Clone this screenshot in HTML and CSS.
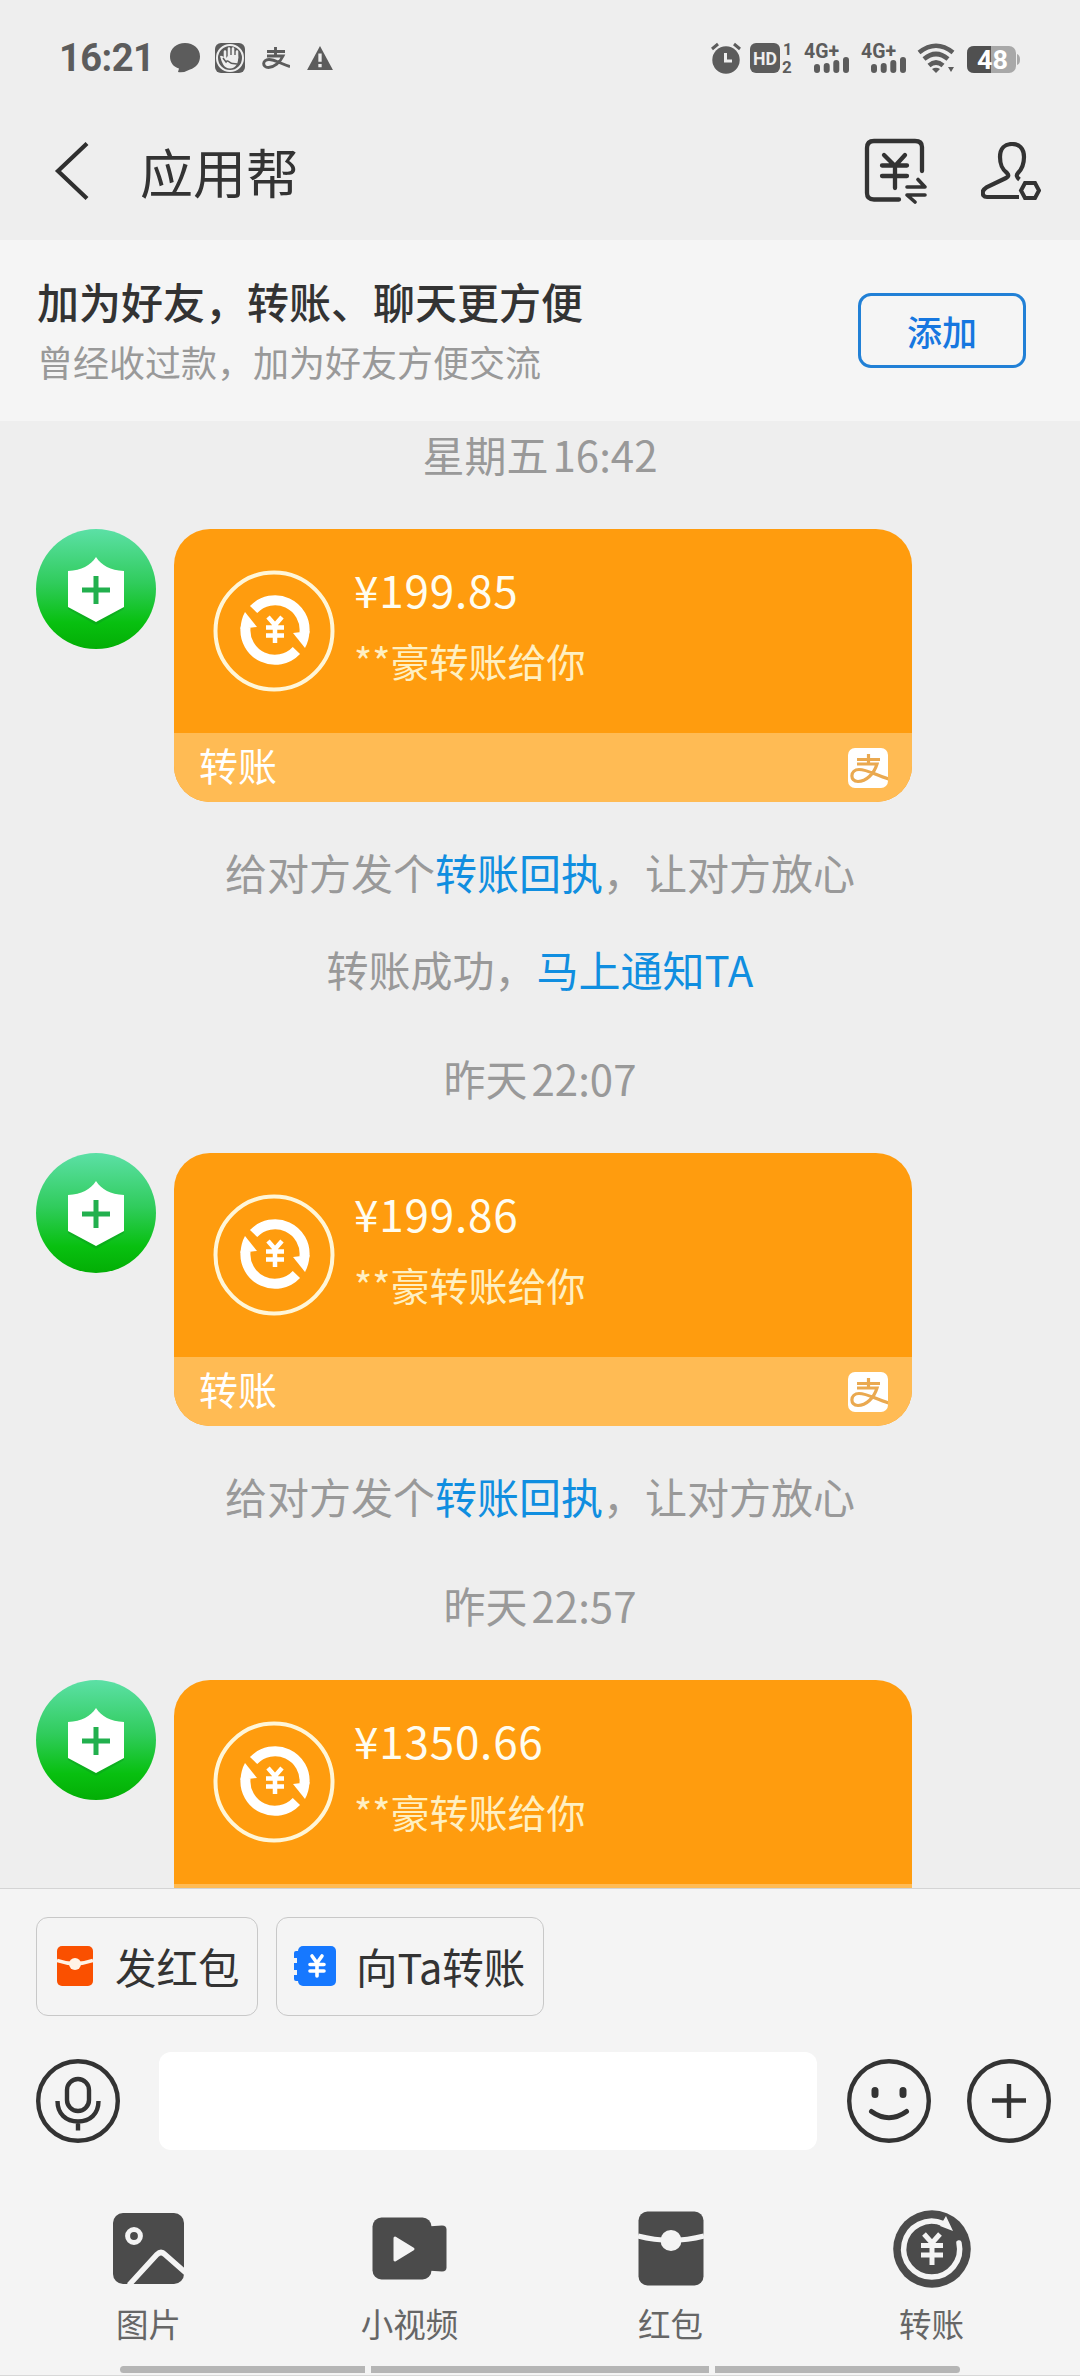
FILE: index.html
```html
<!DOCTYPE html>
<html lang="zh-CN">
<head>
<meta charset="utf-8">
<title>应用帮</title>
<link rel="stylesheet" href="styles.css">
</head>
<body>
<svg class="defs" width="0" height="0" aria-hidden="true">
  <defs>
    <linearGradient id="green" x1="0" y1="0" x2="0" y2="1">
      <stop offset="0" stop-color="#5ce0a6"/>
      <stop offset=".45" stop-color="#30cc5c"/>
      <stop offset=".78" stop-color="#08c010"/>
      <stop offset="1" stop-color="#03ae05"/>
    </linearGradient>
    <symbol id="avatar" viewBox="0 0 120 120">
      <circle cx="60" cy="60" r="60" fill="url(#green)"/>
      <path d="M32 45V80L60 96L88 80V45Z" fill="#0a9a20" opacity=".45"/>
      <path d="M60 28C54 37 46 41 32 42V78L60 93L88 78V42C74 41 66 37 60 28Z" fill="#fff"/>
      <path d="M60 47V75M46 61H74" stroke="#22b04e" stroke-width="5"/>
    </symbol>
    <symbol id="transfer" viewBox="0 0 122 122">
      <circle cx="61" cy="61" r="58.5" fill="none" stroke="#fff6d8" stroke-width="4"/>
      <g id="half">
        <path d="M40.6 39.5A29.5 29.5 0 0 1 91.4 63" fill="none" stroke="#fff" stroke-width="10"/>
        <path d="M80 63L96.500 61Q96 71 92 78Z" fill="#fff"/>
      </g>
      <use href="#half" transform="rotate(180 62 60)"/>
      <path d="M55 47L62 55L69 47M62 55V73M53 57.500H71M53 65.500H71" fill="none" stroke="#fff" stroke-width="4.500"/>
    </symbol>
    <symbol id="zhi" viewBox="0 0 40 40">
      <path d="M9 11.500H32M20.500 6V16M9 16H29C26 26 18 33.500 10 33.500C1.500 33.500 2 21.500 11 21.500C20 21.500 29 28 41 31" fill="none" stroke="currentColor" stroke-width="3.200"/>
    </symbol>
    <symbol id="signal" viewBox="0 0 46 32">
      <g stroke="#5c5c5c" stroke-width="6" stroke-linecap="round">
        <path d="M13 25V28M22.700 24V28M32.300 21V28M42 18V28"/>
      </g>
    </symbol>
  </defs>
</svg>

<div class="screen">
  <header class="top">
    <div class="status">
      <span class="clock">16:21</span>
      <svg class="s-chat" width="30" height="30" viewBox="0 0 30 30"><path d="M15 0C23.500 0 30 5.500 30 13.500C30 20 26 24.500 20 26.500Q14 30 8 29L9 25.500C3.500 24 0 19.500 0 13.500C0 5.500 6.500 0 15 0Z" fill="#5c5c5c"/></svg>
      <svg class="s-hand" width="30" height="30" viewBox="0 0 30 30">
        <rect width="30" height="30" rx="6" fill="#5c5c5c"/>
        <circle cx="15" cy="15" r="13" fill="none" stroke="#eee" stroke-width="2"/>
        <path d="M10 18V8.500M14 14V5.500M18 14V5.500M22 15V8.500" stroke="#eee" stroke-width="2.600" stroke-linecap="round"/>
        <path d="M5 13Q8 12 10 16L14 12H23C24 20 21 25.500 15 25.500C9 25.500 7 20 5 13Z" fill="#eee"/>
        <path d="M8 15L11 19C13 16 15 21 18 20.500L22 21" stroke="#5c5c5c" stroke-width="1.500" fill="none"/>
      </svg>
      <svg class="s-zhi" width="28" height="22" viewBox="0 0 28 22"><path d="M5 4.500H23M13.500 0V9M5 9H21C18 15.500 12 20.500 6.500 20.500C0 20.500 0 12.500 7 12.500C13 12.500 19 17 28 19.500" fill="none" stroke="#5c5c5c" stroke-width="2.900"/></svg>
      <svg class="s-warn" width="28" height="24" viewBox="0 0 28 26"><path d="M14 0L28 26H0Z" fill="#5c5c5c"/><path d="M14 8V17M14 19.500V23" stroke="#eee" stroke-width="3.600"/></svg>
      <div class="status-right">
        <svg width="30" height="32" viewBox="0 0 30 32"><circle cx="15" cy="18" r="13.700" fill="#5c5c5c"/><path d="M1 7L7 2M29 7L23 2" stroke="#5c5c5c" stroke-width="3"/><path d="M14.500 11V19H21" fill="none" stroke="#eee" stroke-width="3"/></svg>
        <svg class="s-hd" width="43" height="32" viewBox="0 0 43 32"><rect y="1" width="30" height="30" rx="6" fill="#5c5c5c"/><text x="3" y="23" textLength="24" lengthAdjust="spacingAndGlyphs" font-size="19" fill="#eee">HD</text><text x="33" y="12.500" font-size="16" fill="#5c5c5c">1</text><text x="32" y="31" font-size="17" fill="#5c5c5c">2</text></svg>
        <svg class="s-net" width="46" height="32" viewBox="0 0 46 32"><text x="0" y="15.500" textLength="35" lengthAdjust="spacingAndGlyphs" font-size="21" fill="#5c5c5c">4G+</text><use href="#signal"/></svg>
        <svg class="s-net" width="46" height="32" viewBox="0 0 46 32"><text x="0" y="15.500" textLength="35" lengthAdjust="spacingAndGlyphs" font-size="21" fill="#5c5c5c">4G+</text><use href="#signal"/></svg>
        <svg class="s-wifi" width="37" height="32" viewBox="0 0 37 32"><g fill="none" stroke="#5c5c5c" stroke-width="4.600"><path d="M1 10.500Q18 -3 35 10.500"/><path d="M6 17Q18 7 30 17"/><path d="M11 23.500Q18 17.500 25 23.500"/></g><path d="M14 27Q18 24.500 22 27L18 31Z" fill="#5c5c5c"/><path d="M30 25H36L33 30Z" fill="#5c5c5c"/></svg>
        <svg class="s-batt" width="53" height="32" viewBox="0 0 53 32"><rect y="4" width="49" height="27" rx="7" fill="#a8a8a8"/><path d="M24 4H7Q0 4 0 11V24Q0 31 7 31H24Z" fill="#505050"/><path d="M50 12Q53 13 53 17.500Q53 22 50 23Z" fill="#a8a8a8"/><text x="10" y="26.500" font-size="25" textLength="31" lengthAdjust="spacingAndGlyphs" fill="#fff">48</text></svg>
      </div>
    </div>
    <div class="nav">
      <svg class="back" width="36" height="58" viewBox="0 0 36 58"><path d="M33 1.500L4 29L33 56.500" fill="none" stroke="#2f2f2f" stroke-width="4.200"/></svg>
      <h1>应用帮</h1>
      <svg class="bill" width="66" height="66" viewBox="0 0 66 66"><g fill="none" stroke="#333" stroke-width="4.300" stroke-linecap="round" stroke-linejoin="round"><path d="M58 33V9Q58 3 51 3H10Q3 3 3 10V55Q3 61.500 10 61.500H35"/><path d="M20 17L31 28L41 17M31 28V50M18 27.500H43M18 38H43"/><path d="M43 49H61L54 41.500M61 57H43L51 64" stroke-width="3.600"/></g></svg>
      <svg class="person" width="60" height="58" viewBox="0 0 60 58"><g fill="none" stroke="#333" stroke-width="4.200"><path d="M38 55H6Q1 55 2 49Q3 47 6 45L25 36Q29 34 26 31C21 27 19 23 19 15C19 6 24 2 31 2C38 2 43 6 43 15C43 23 41 27 37 31Q34 34 38.500 37.500"/><path d="M44 41H54L58 48.500L54 56H44L40 48.500Z" stroke-width="4"/></g></svg>
    </div>
  </header>

  <section class="banner">
    <div class="banner-text">
      <p class="banner-title">加为好友，转账、聊天更方便</p>
      <p class="banner-sub">曾经收过款，加为好友方便交流</p>
    </div>
    <button class="add">添加</button>
  </section>

  <main class="chat">
    <p class="line">星期五<span class="time">16:42</span></p>
    <div class="message">
      <svg class="avatar"><use href="#avatar"/></svg>
      <article class="card">
        <div class="card-main">
          <svg class="coin"><use href="#transfer"/></svg>
          <div class="card-text"><p class="amount">¥199.85</p><p class="from">**豪转账给你</p></div>
        </div>
        <footer class="card-foot"><span>转账</span><span class="logo"><svg width="40" height="40"><use href="#zhi"/></svg></span></footer>
      </article>
    </div>
    <p class="line after-card">给对方发个<a>转账回执</a>，让对方放心</p>
    <p class="line after-line">转账成功，<a>马上通知TA</a></p>
    <p class="line stamp">昨天<span class="time">22:07</span></p>
    <div class="message">
      <svg class="avatar"><use href="#avatar"/></svg>
      <article class="card">
        <div class="card-main">
          <svg class="coin"><use href="#transfer"/></svg>
          <div class="card-text"><p class="amount">¥199.86</p><p class="from">**豪转账给你</p></div>
        </div>
        <footer class="card-foot"><span>转账</span><span class="logo"><svg width="40" height="40"><use href="#zhi"/></svg></span></footer>
      </article>
    </div>
    <p class="line after-card">给对方发个<a>转账回执</a>，让对方放心</p>
    <p class="line stamp">昨天<span class="time">22:57</span></p>
    <div class="message">
      <svg class="avatar"><use href="#avatar"/></svg>
      <article class="card">
        <div class="card-main">
          <svg class="coin"><use href="#transfer"/></svg>
          <div class="card-text"><p class="amount">¥1350.66</p><p class="from">**豪转账给你</p></div>
        </div>
        <footer class="card-foot"></footer>
      </article>
    </div>
  </main>

  <section class="panel">
    <div class="chips">
      <button class="chip chip-red">
        <svg width="36" height="40" viewBox="0 0 36 40"><rect width="36" height="40" rx="5" fill="#fa5000"/><path d="M0 14.500Q18 21 36 14.500" fill="none" stroke="#fff3e6" stroke-width="3.500"/><circle cx="18" cy="18" r="6" fill="#fff3e6"/></svg>
        <span>发红包</span>
      </button>
      <button class="chip chip-blue">
        <svg width="42" height="40" viewBox="0 0 42 40"><rect x="4" width="38" height="40" rx="5" fill="#1678ff"/><path d="M6 5H2Q0 5 0 7V12H3V17H0V24H3V29H0V33Q0 35 2 35H6Z" fill="#1678ff"/><path d="M18 10L23 17L28 10M23 17V30M16 18.500H30M16 25H30" fill="none" stroke="#fff" stroke-width="3.600" stroke-linecap="round"/></svg>
        <span>向Ta转账</span>
      </button>
    </div>
    <div class="composer">
      <svg width="84" height="84" viewBox="0 0 84 84"><g fill="none" stroke="#333" stroke-width="4.400"><circle cx="42" cy="42" r="39.800"/><rect x="31" y="20" width="22" height="32" rx="11"/><path d="M21.500 42C21.500 55 30 62.500 42 62.500C54 62.500 62.500 55 62.500 42M42 62V71.500"/></g></svg>
      <div class="input"></div>
      <svg width="84" height="84" viewBox="0 0 84 84"><g fill="none" stroke="#333" stroke-linecap="round"><circle cx="42" cy="42" r="39.800" stroke-width="4.400"/><path d="M28 31.500V35.500M56 31.500V35.500" stroke-width="7"/><path d="M24.500 52.500Q42 65 59.500 52.500" stroke-width="5"/></g></svg>
      <svg class="plus" width="84" height="84" viewBox="0 0 84 84"><g fill="none" stroke="#333" stroke-width="4.400"><circle cx="42" cy="42" r="39.800"/><path d="M42 25V59M25 41.500H59"/></g></svg>
    </div>
    <div class="tools">
      <div class="tool">
        <svg width="78" height="78" viewBox="0 0 78 78"><rect x="3" y="3" width="71" height="71" rx="10" fill="#4b4b4b"/><circle cx="24" cy="26" r="6.400" fill="none" stroke="#f4f4f4" stroke-width="5"/><path d="M19 75L47 44.500Q51 40.500 55 44.500L76 63" fill="none" stroke="#f4f4f4" stroke-width="5.500"/></svg>
        <span>图片</span>
      </div>
      <div class="tool">
        <svg width="78" height="78" viewBox="0 0 78 78"><rect x="1.500" y="7.500" width="59" height="62" rx="9" fill="#4b4b4b"/><path d="M56 16.500L71 15.500Q75.500 15.500 75.500 19.500V57.500Q75.500 61.500 71 61.500L56 60.500Z" fill="#4b4b4b"/><path d="M24 28L42 39L24 50Z" fill="#f4f4f4" stroke="#f4f4f4" stroke-width="3" stroke-linejoin="round"/></svg>
        <span>小视频</span>
      </div>
      <div class="tool">
        <svg width="78" height="78" viewBox="0 0 78 78"><rect x="6.500" y="1.500" width="65" height="74" rx="9" fill="#4b4b4b"/><path d="M6 26Q39 34.500 72 26" fill="none" stroke="#f4f4f4" stroke-width="5"/><circle cx="39" cy="30.500" r="10.500" fill="#f4f4f4"/></svg>
        <span>红包</span>
      </div>
      <div class="tool">
        <svg width="78" height="78" viewBox="0 0 78 78"><circle cx="39" cy="39" r="38.800" fill="#4b4b4b"/><path d="M66 33A28 28 0 1 1 50 13.500" fill="none" stroke="#f4f4f4" stroke-width="5.500" stroke-linecap="round"/><path d="M53 6L60 21L47 16Z" fill="#f4f4f4"/><path d="M31 24L39 33L47 24M39 33V55M28 35.500H50M28 45H50" fill="none" stroke="#f4f4f4" stroke-width="5"/></svg>
        <span>转账</span>
      </div>
    </div>
    <div class="gesture"><i class="seg side-left"></i><i class="seg middle"></i><i class="seg side-right"></i></div>
  </section>
</div>
</body>
</html>
```
FILE: styles.css
```css
* { box-sizing: border-box; }
body {
  margin: 0;
  background: #eee;
  color: #333;
  font-family: "Noto Sans CJK SC", sans-serif;
}
p, h1 { margin: 0; font-weight: 400; white-space: nowrap; }
svg { display: block; flex: none; }
button { margin: 0; background: none; font: inherit; color: inherit; }
.defs { position: absolute; }
.screen {
  width: 1080px;
  height: 2376px;
  display: flex;
  flex-direction: column;
  overflow: hidden;
}

.top { height: 240px; flex: none; background: #eee; }
.status {
  height: 116px;
  padding-left: 59px;
  display: flex;
  align-items: center;
  color: #5c5c5c;
}
.clock {
  width: 93px;
  font: 700 38px/40px Roboto, sans-serif;
  letter-spacing: -.5px;
}
.s-chat { margin-left: 18px; }
.s-hand { margin-left: 15px; }
.s-zhi { margin-left: 17px; }
.s-warn { margin-left: 16px; }
.status-right {
  margin-left: auto;
  padding-right: 60px;
  display: flex;
  align-items: center;
  font-family: Roboto, sans-serif;
  font-weight: 700;
}
.status-right svg { overflow: visible; }
.s-hd { margin-left: 9px; }
.s-net { margin-left: 11px; }
.s-wifi { margin-left: 11px; }
.s-batt { margin-left: 12px; }

.nav {
  height: 110px;
  padding: 0 39px 0 54px;
  display: flex;
  align-items: center;
}
.nav h1 { margin-left: 50px; font-size: 53px; line-height: 70px; }
.bill { margin-left: auto; }
.person { margin-left: 51px; }

.banner {
  height: 181px;
  flex: none;
  padding: 0 54px 0 37px;
  display: flex;
  align-items: center;
  justify-content: space-between;
  background: #f5f5f5;
}
.banner-title { font-size: 42px; font-weight: 500; line-height: 60px; }
.banner-sub { font-size: 36px; line-height: 60px; color: #999; }
.add {
  width: 168px;
  height: 75px;
  padding: 0;
  border: 3px solid #2180d6;
  border-radius: 13px;
  color: #1677e0;
  font-size: 35px;
  font-weight: 500;
}

.chat { height: 1467px; flex: none; padding-top: 3px; overflow: hidden; }
.line {
  font-size: 42px;
  line-height: 60px;
  text-align: center;
  color: #999;
}
.line a { color: #108ee0; }
.time { margin-left: 4px; }
.after-card { margin-top: 40px; }
.after-line { margin-top: 37px; }
.stamp { margin-top: 49px; }
.message {
  margin-top: 45px;
  padding-left: 36px;
  display: flex;
  align-items: flex-start;
  gap: 18px;
}
.avatar { width: 120px; height: 120px; }
.card {
  width: 738px;
  height: 273px;
  border-radius: 36px;
  overflow: hidden;
  background: #ff9c0e;
}
.card-main { height: 204px; padding: 41px 0 0 39px; display: flex; gap: 19px; }
.coin { width: 122px; height: 122px; }
.amount {
  margin-top: -11px;
  font-size: 44px;
  line-height: 60px;
  letter-spacing: .8px;
  color: #fffdf0;
}
.from { margin-top: 11px; font-size: 39px; line-height: 60px; color: #fff0c2; }
.card-foot {
  height: 69px;
  padding: 0 24px 0 25px;
  display: flex;
  align-items: center;
  justify-content: space-between;
  background: #ffbb54;
  color: #fff;
  font-size: 39px;
  line-height: 60px;
}
.card-foot > span:first-child { padding-bottom: 7px; }
.logo { border-radius: 7px; overflow: hidden; background: #fff; color: #eaa950; }

.panel {
  flex: 1;
  border-top: 1px solid #d4d4d4;
  background: #f4f4f4;
  display: flex;
  flex-direction: column;
}
.chips { padding: 28px 36px 0; display: flex; gap: 18px; }
.chip {
  height: 99px;
  padding: 0 0 2px 20px;
  display: flex;
  align-items: center;
  border: 1px solid #c8c8c8;
  border-radius: 12px;
  font-size: 41.500px;
  line-height: 60px;
  white-space: nowrap;
}
.chip-red { width: 222px; gap: 22px; }
.chip-blue { width: 268px; padding-left: 17px; gap: 20px; }
.composer { margin-top: 36px; padding-left: 36px; display: flex; align-items: center; }
.input { width: 658px; height: 98px; margin: 0 30px 0 39px; border-radius: 12px; background: #fff; }
.plus { margin-left: 36px; }
.tools {
  margin-top: 60px;
  padding: 0 18px;
  display: grid;
  grid-template-columns: repeat(4, 261px);
}
.tool {
  display: flex;
  flex-direction: column;
  align-items: center;
  gap: 10px;
  color: #666;
  font-size: 32.500px;
  line-height: 50px;
}
.gesture {
  margin-top: auto;
  height: 10px;
  padding-left: 120px;
  display: flex;
  gap: 6px;
  border-bottom: 1px solid #d8d8d8;
}
.seg { height: 7px; background: #b5b5b5; }
.side-left { width: 245px; border-radius: 4px 0 0 4px; }
.middle { width: 338px; }
.side-right { width: 245px; border-radius: 0 4px 4px 0; }
```
